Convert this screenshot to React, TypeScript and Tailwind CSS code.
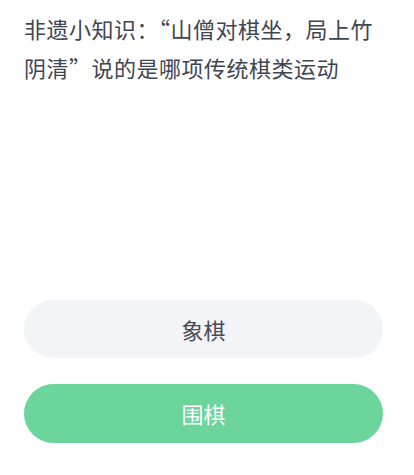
const options = [
  { label: "象棋", picked: false },
  { label: "围棋", picked: true },
];

const App = () => {
  return (
    <div
      className="w-[414px] h-[475px] bg-white pl-6 pr-[31px] flex flex-col"
      style={{ fontFamily: '"Noto Sans CJK SC", "Noto Sans", sans-serif' }}
    >
      <h1 className="pt-[9px] text-[22px] leading-[39px] font-normal text-[#3f4552] tracking-[0.5px]">
        非遗小知识：“山僧对棋坐，局上竹阴清”说的是哪项传统棋类运动
      </h1>
      <div className="mt-auto mb-[32px] flex flex-col gap-[26px]">
        {options.map((o) => (
          <button
            key={o.label}
            className={
              o.picked
                ? "h-[59px] w-full rounded-full bg-[#6bd59c] text-white text-[22px]"
                : "h-[58px] w-full rounded-full bg-[#f3f4f7] text-[#454b58] text-[22px]"
            }
          >
            {o.label}
          </button>
        ))}
      </div>
    </div>
  );
};

export default App;
